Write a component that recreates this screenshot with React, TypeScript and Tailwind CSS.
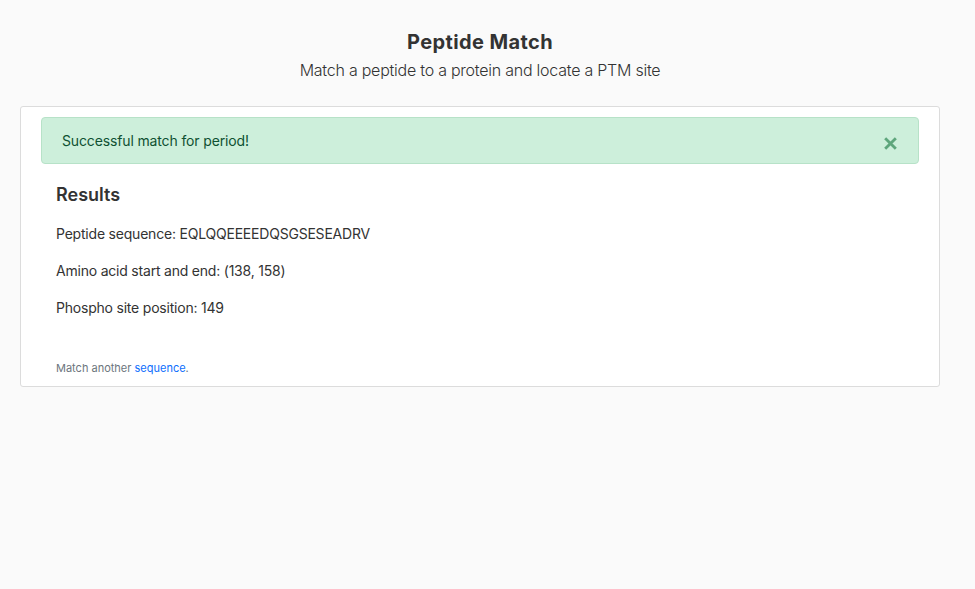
const App = () => {
  return (
    <div
      className="min-h-[589px] bg-[#fafafa] text-[#333] pt-[28px]"
      style={{ fontFamily: "Inter, 'Noto Sans', sans-serif" }}
    >
      <div className="w-[920px] ml-[20px]">
        <div className="text-center">
          <h1 className="text-[20px] font-bold leading-[28px] tracking-[0.02em] text-[#333]">Peptide Match</h1>
          <p className="text-[16px] font-light leading-[24px] mt-[2px] tracking-[-0.015em] text-[#333]">
            Match a peptide to a protein and locate a PTM site
          </p>
        </div>
        <div className="mt-[24px] bg-white border border-[#dcdcdc] rounded-[3px] pt-[10px] px-[20px] pb-[10px]">
          <div className="flex items-center justify-between h-[47px] bg-[#cdefdb] border border-[#b7e2c8] rounded-[4px] pl-[20px] pr-[20px] text-[#0f5132]">
            <span className="text-[14px] tracking-[-0.01em]">Successful match for period!</span>
            <svg width="13" height="13" viewBox="0 0 12 12" className="mt-[5px] mr-[1px]">
              <path d="M2 2 L10 10 M10 2 L2 10" stroke="#5ea67c" strokeWidth="2.6" strokeLinecap="square" />
            </svg>
          </div>
          <div className="px-[15px]">
            <h2 className="text-[18px] font-semibold mt-[18px] leading-[26px]">Results</h2>
            <p className="text-[14px] leading-[20px] mt-[16px] tracking-[-0.015em]">Peptide sequence: EQLQQEEEEDQSGSESEADRV</p>
            <p className="text-[14px] leading-[20px] mt-[17px] tracking-[-0.015em]">Amino acid start and end: (138, 158)</p>
            <p className="text-[14px] leading-[20px] mt-[17px] tracking-[-0.015em]">Phospho site position: 149</p>
            <p className="text-[11px] leading-[16px] mt-[42px] text-[#6c757d]">
              Match another <a className="text-[#0d6efd]" href="#">sequence</a>.
            </p>
          </div>
        </div>
      </div>
    </div>
  );
};

export default App;
